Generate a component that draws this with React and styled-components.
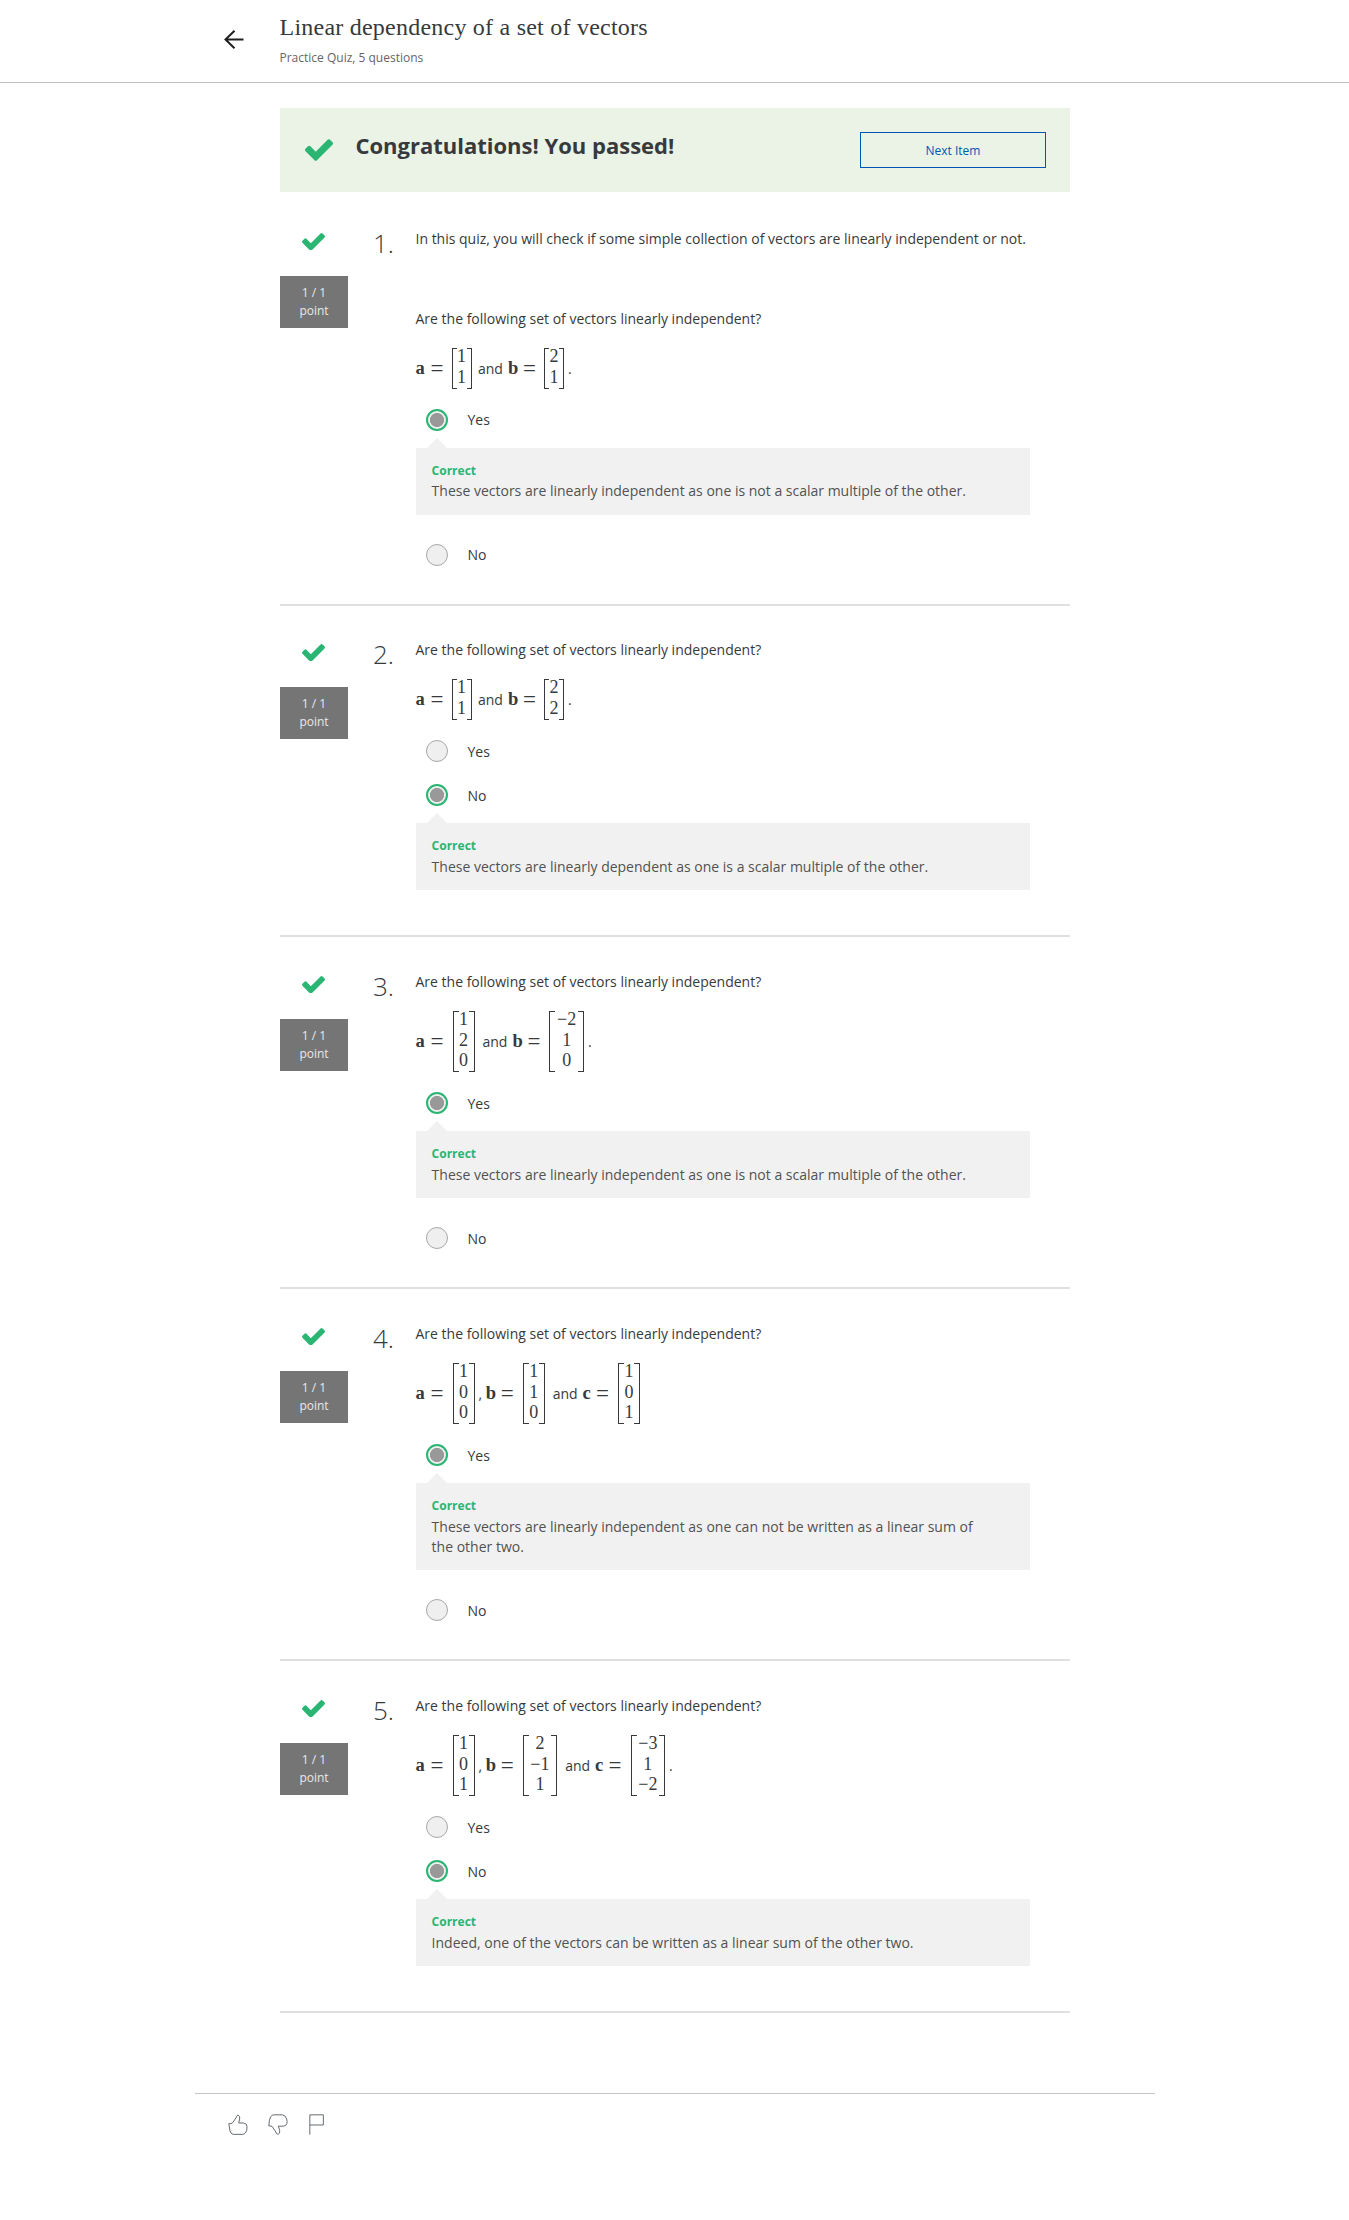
import React from 'react';
import styled, { createGlobalStyle, css } from 'styled-components';

const GlobalStyle = createGlobalStyle`
  * { box-sizing: border-box; }
  body {
    margin: 0;
    background: #fff;
    color: #373a3c;
    font-family: "Open Sans", "Noto Sans", sans-serif;
    font-size: 14px;
    line-height: 20px;
  }
  p, h1, h2 { margin: 0; font-weight: 400; }
`;

const Header = styled.header`
  display: flex;
  height: 83px;
  padding-left: 224px;
  border-bottom: 1px solid #bdbdbd;
`;

const BackButton = styled.button`
  width: 55.5px;
  height: 20px;
  margin-top: 30px;
  padding: 0;
  border: 0;
  background: none;
  text-align: left;
  svg { display: block; }
`;

const Title = styled.h1`
  margin-top: 12px;
  font: 400 24px/30px "Liberation Serif", serif;
  letter-spacing: 0.23px;
  color: #373a3c;
`;

const Subtitle = styled.p`
  margin-top: 7px;
  font-size: 12px;
  line-height: 18px;
  color: #666;
`;

const Main = styled.main`
  width: 790px;
  margin: 25px 0 0 280px;
`;

const Banner = styled.section`
  display: flex;
  height: 84px;
  padding: 24px 24px 0 25.4px;
  background: #eaf3e6;
`;

const BannerTitle = styled.h2`
  flex: 1;
  margin-left: 22px;
  margin-top: -3px;
  font-size: 22px;
  font-weight: 700;
  line-height: 32px;
`;

const NextButton = styled.button`
  width: 186px;
  height: 36px;
  padding: 1px 0 0;
  border: 1px solid #0156b3;
  background: transparent;
  color: #0156b3;
  font: 400 12px/18px "Open Sans", sans-serif;
`;

const CheckSvg = styled.svg`
  display: block;
  flex: none;
  fill: #2ab573;
  ${(p) => (p.$large ? css`margin-top: 7px;` : css`margin-left: -1px;`)}
`;

const QuestionBox = styled.article`
  display: flex;
  padding-top: 37px;
  border-bottom: 2px solid #e0e0e0;
  & + & { padding-top: 34px; }
  & + & + & { padding-top: 35px; }
`;

const Status = styled.div`
  display: flex;
  flex-direction: column;
  align-items: center;
  width: 68px;
  padding-top: 3.6px;
`;

const Points = styled.div`
  width: 68px;
  height: 52px;
  margin-top: 25.8px;
  padding-top: 8.5px;
  background: #757575;
  color: #e8e8e8;
  font-size: 12px;
  line-height: 18px;
  text-align: center;
`;

const Number = styled.div`
  width: 46px;
  font-size: 26px;
  font-weight: 300;
  line-height: 28px;
  text-align: right;
`;

const Content = styled.div`
  width: 616px;
  margin-left: 21.5px;
  padding-bottom: ${(p) => (p.$endsWithFeedback ? 45 : 38)}px;
`;

const Prompt = styled.p`
  height: 20px;
  white-space: nowrap;
  & + & { margin-top: 60px; }
`;

const Equation = styled.div`
  display: flex;
  align-items: center;
  height: ${(p) => p.$rows * 20 + 1}px;
  margin: 19px 0 20px;
  line-height: 20px;
`;

const Symbol = styled.b`
  width: ${(p) => (p.$wide ? 15 : 13.5)}px;
  margin-top: -2px;
  font: 700 18.5px/20px "Liberation Serif", serif;
`;

const Equals = styled.span`
  width: 12px;
  margin-right: ${(p) => (p.$rows === 3 ? 10 : 9)}px;
  font: 400 23px/20px "Liberation Serif", serif;
`;

const MatrixBox = styled.span`
  display: flex;
  height: 100%;
`;

const Bracket = styled.span`
  width: ${(p) => (p.$rows === 3 ? 6 : 5)}px;
  border: 1px solid #373a3c;
  ${(p) => (p.$side === 'left' ? 'border-right: 0;' : 'border-left: 0;')}
`;

const Entries = styled.span`
  display: grid;
  grid-auto-rows: ${(p) => (p.$rows === 3 ? 20.2 : 20.8)}px;
  width: ${(p) => (p.$wide ? 22.5 : 10)}px;
  justify-items: center;
  margin-top: -1.6px;
  font: 400 18px/20px "Liberation Serif", serif;
  white-space: nowrap;
`;

const Joiner = styled.span`
  margin: 0 ${(p) => (p.$mark ? 3.5 : 5)}px 0 ${(p) => (p.$mark ? 4 : p.$rows === 3 ? 8 : 6.5)}px;
`;

const Option = styled.label`
  display: flex;
  align-items: center;
  height: 22px;
  margin-left: 10.5px;
  ${(p) => p.$spaced && css`margin-top: 22px;`}
`;

const OptionText = styled.span`
  padding-top: ${(p) => (p.$low ? 2 : 0)}px;
`;

const Radio = styled.span`
  display: block;
  width: 22px;
  height: 22px;
  margin-right: 19.5px;
  border-radius: 50%;
  border: 1px solid #a8a8a8;
  background: #efefef;
  ${(p) => p.$checked && css`
    border: 2px solid #2ab573;
    background: radial-gradient(circle at center, #999 6.7px, #efefef 7.4px);
  `}
`;

const Feedback = styled.div`
  position: relative;
  width: 614px;
  margin: 17px 0 ${(p) => (p.$last ? 0 : 29)}px 0.5px;
  padding: 12px 48px ${(p) => (p.$low ? 13 : 14)}px 15.6px;
  background: #f1f1f1;
  color: #525252;
  &::before {
    content: "";
    position: absolute;
    top: -10px;
    left: 11px;
    border: solid transparent;
    border-width: 0 10px 10px;
    border-bottom-color: #f1f1f1;
  }
`;

const Verdict = styled.strong`
  display: block;
  margin-bottom: ${(p) => (p.$low ? 1 : 0)}px;
  color: #2ab573;
  font-size: 12px;
  line-height: 21px;
`;

const Footer = styled.footer`
  display: flex;
  gap: 20.6px;
  width: 960px;
  margin: 80px 0 0 195px;
  padding: 19.8px 0 0 32.6px;
  border-top: 1px solid #c4c4c4;
  svg { display: block; fill: none; stroke: #555b61; stroke-width: 2.7; }
`;

function Check({ large }) {
  return (
    <CheckSvg $large={large} width={large ? 28 : 23} height={large ? 22 : 17.6} viewBox="121 334 1550 1188">
      <path d="M1671 566q0 40-28 68l-724 724-136 136q-28 28-68 28t-68-28l-136-136-362-362q-28-28-28-68t28-68l136-136q28-28 68-28t68 28l294 295 656-657q28-28 68-28t68 28l136 136q28 28 28 68z" />
    </CheckSvg>
  );
}

function Matrix({ values }) {
  const rows = values.length;
  const wide = values.some((v) => v < 0);
  return (
    <MatrixBox>
      <Bracket $side="left" $rows={rows} />
      <Entries $wide={wide} $rows={rows}>
        {values.map((v, i) => <span key={i}>{String(v).replace('-', '−')}</span>)}
      </Entries>
      <Bracket $side="right" $rows={rows} />
    </MatrixBox>
  );
}

const ask = 'Are the following set of vectors linearly independent?';
const independent = 'These vectors are linearly independent as one is not a scalar multiple of the other.';

const questions = [
  {
    intro: 'In this quiz, you will check if some simple collection of vectors are linearly independent or not.',
    terms: [['a', [1, 1], 'and'], ['b', [2, 1], '.']],
    answer: 'Yes',
    feedback: independent,
  },
  {
    terms: [['a', [1, 1], 'and'], ['b', [2, 2], '.']],
    answer: 'No',
    feedback: 'These vectors are linearly dependent as one is a scalar multiple of the other.',
  },
  {
    terms: [['a', [1, 2, 0], 'and'], ['b', [-2, 1, 0], '.']],
    answer: 'Yes',
    feedback: independent,
  },
  {
    terms: [['a', [1, 0, 0], ','], ['b', [1, 1, 0], 'and'], ['c', [1, 0, 1], '']],
    answer: 'Yes',
    feedback: 'These vectors are linearly independent as one can not be written as a linear sum of the other two.',
  },
  {
    terms: [['a', [1, 0, 1], ','], ['b', [2, -1, 1], 'and'], ['c', [-3, 1, -2], '.']],
    answer: 'No',
    feedback: 'Indeed, one of the vectors can be written as a linear sum of the other two.',
  },
];

function Question({ number, intro, terms, answer, feedback }) {
  const rows = terms[0][1].length;
  const low = !intro;
  return (
    <QuestionBox>
      <Status>
        <Check />
        <Points>1 / 1<br />point</Points>
      </Status>
      <Number>{number}.</Number>
      <Content $endsWithFeedback={answer === 'No'}>
        {intro && <Prompt>{intro}</Prompt>}
        <Prompt>{ask}</Prompt>
        <Equation $rows={rows}>
          {terms.map(([name, values, joiner]) => (
            <React.Fragment key={name}>
              <Symbol $wide={name !== 'c'}>{name}</Symbol>
              <Equals $rows={rows}>=</Equals>
              <Matrix values={values} />
              {joiner && <Joiner $rows={rows} $mark={joiner !== 'and'}>{joiner}</Joiner>}
            </React.Fragment>
          ))}
        </Equation>
        {['Yes', 'No'].map((label, i) => (
          <React.Fragment key={label}>
            <Option $spaced={i === 1 && answer === 'No'}>
              <Radio $checked={label === answer} />
              <OptionText $low={low}>{label}</OptionText>
            </Option>
            {label === answer && (
              <Feedback $last={i === 1} $low={low}>
                <Verdict $low={low}>Correct</Verdict>
                {feedback}
              </Feedback>
            )}
          </React.Fragment>
        ))}
      </Content>
    </QuestionBox>
  );
}

export default function App() {
  return (
    <>
      <GlobalStyle />
      <Header>
        <BackButton aria-label="Back">
          <svg width="20" height="20" viewBox="0 0 20 20" fill="none" stroke="#1f1f1f" strokeWidth="2">
            <path d="M10.5 .8L1.5 9.5L10.5 18.2M1.5 9.5H19.5" />
          </svg>
        </BackButton>
        <div>
          <Title>Linear dependency of a set of vectors</Title>
          <Subtitle>Practice Quiz, 5 questions</Subtitle>
        </div>
      </Header>
      <Main>
        <Banner>
          <Check large />
          <BannerTitle>Congratulations! You passed!</BannerTitle>
          <NextButton>Next Item</NextButton>
        </Banner>
        {questions.map((q, i) => <Question key={i} number={i + 1} {...q} />)}
      </Main>
      <Footer>
        <svg width="20" height="21.33" viewBox="143 130 60 64">
          <path d="M145.5 159Q153 160 157 156L168 140Q170 133 173 133Q180 136 178 145L175 157H189Q200 158 200 167Q201 181 195 187Q192 191 187 191H158Q151 189 149 181Z" />
        </svg>
        <svg width="20" height="21.33" viewBox="266 130 60 64">
          <path d="M268.5 166Q269 147 274 138Q278 132.500 284 132.500H309Q318 133 322 145Q326 161 317 165L312 166.500H297L301 179Q303 189 296 191Q292 191 290 185L279 168Q276 165 268.500 166Z" />
        </svg>
        <svg width="15.33" height="21.33" viewBox="388 130 46 64">
          <path d="M390.500 192V132.500H431V163H390.500" />
        </svg>
      </Footer>
    </>
  );
}
